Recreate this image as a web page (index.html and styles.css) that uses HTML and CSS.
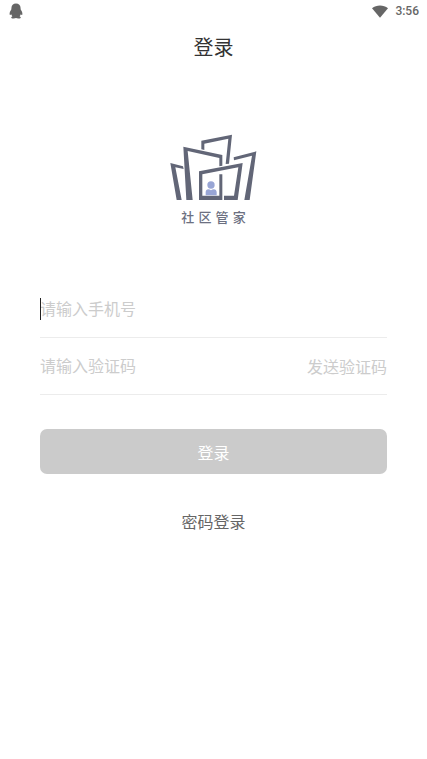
FILE: index.html
```html
<!DOCTYPE html>
<html lang="zh-CN">
<head>
<meta charset="utf-8">
<meta name="viewport" content="width=device-width, initial-scale=1">
<title>登录</title>
<link rel="stylesheet" href="styles.css">
</head>
<body>
<div class="status-bar">
  <svg class="notice-icon" viewBox="0 0 14 16" aria-hidden="true">
    <path d="M7 .5C4.200.5 2.500 2.300 2.500 4.600L2.300 6.600C1.200 8 .5 9.900.6 11.200c.1 1 .8.8 1.600 0 .2.9.6 1.400 1.200 2-1 .5-1.400 1.100-1 1.700.6.7 3.500.7 4.600.2 1.100.5 4 .5 4.600-.2.4-.6 0-1.200-1-1.700.6-.6 1-1.100 1.200-2 .8.8 1.500 1 1.600 0 .1-1.300-.6-3.200-1.700-4.600l-.2-2C11.500 2.300 9.800.5 7 .5z"/>
  </svg>
  <div class="status-right">
    <svg class="wifi-icon" viewBox="0 0 16 13" aria-hidden="true"><path d="M0 3.300C4.500-.5 11.500-.5 16 3.300L8 12.800z"/></svg>
    <time>3:56</time>
  </div>
</div>
<header class="title-bar"><h1>登录</h1></header>
<main class="login">
  <div class="brand">
    <svg class="brand-mark" viewBox="29 24 264 204" aria-hidden="true">
      <g class="building">
        <path d="M68 124L70 132L45 127L64 225H49L30 114z"/>
        <path d="M69 65L186 90V122L177 124V99L82 78L97 225H78z"/>
        <path d="M123 73V47L215 29L206 116L196 117L204 41L132 56V75z"/>
        <path d="M220 97L288 79L268 225H252L275 92L221 106z"/>
        <path d="M116 139L247 114L232 225H191V212H221L234 127L126 148V212H177V148H186V225H116z"/>
      </g>
      <g class="person">
        <circle cx="152" cy="180" r="11"/>
        <path d="M136 211V202C136 192 145 191 152 196C159 191 169 192 169 202V211z"/>
      </g>
    </svg>
    <p class="brand-name">社 区 管 家</p>
  </div>
  <form class="login-form">
    <div class="field field-active">
      <input type="tel" aria-label="手机号" placeholder="请输入手机号">
    </div>
    <div class="field">
      <input type="text" inputmode="numeric" aria-label="验证码" placeholder="请输入验证码">
      <button class="send-code" type="button">发送验证码</button>
    </div>
    <button class="submit" type="submit">登录</button>
  </form>
  <a class="password-login" href="#password">密码登录</a>
</main>
</body>
</html>
```

FILE: styles.css
```css
* {
  box-sizing: border-box;
}

body {
  margin: 0;
  background: #fff;
  color: #333;
  font-family: Roboto, "Noto Sans CJK SC", sans-serif;
  font-size: 16px;
}

input,
button {
  margin: 0;
  padding: 0;
  border: 0;
  background: none;
  color: inherit;
  font: inherit;
}

.status-bar {
  display: flex;
  align-items: center;
  justify-content: space-between;
  height: 22px;
  padding: 0 8px 0 9px;
  color: #666;
}

.status-bar svg {
  display: block;
  fill: #666;
}

.notice-icon {
  width: 14px;
  height: 16px;
}

.status-right {
  display: flex;
  align-items: center;
  gap: 7px;
  font-size: 12px;
  font-weight: 500;
  line-height: 24px;
}

.wifi-icon {
  width: 16px;
  height: 13px;
}

.title-bar {
  display: flex;
  align-items: center;
  justify-content: center;
  height: 52px;
}

.title-bar h1 {
  margin: 0;
  font-size: 20px;
  font-weight: 400;
  line-height: 28px;
}

.login {
  display: flex;
  flex-direction: column;
  align-items: center;
  padding: 59px 40px 40px;
}

.brand {
  display: flex;
  flex-direction: column;
  align-items: center;
  gap: 7px;
}

.brand-mark {
  display: block;
  width: 88px;
  height: 68px;
}

.building {
  fill: #626677;
}

.person {
  fill: #98a5d5;
}

.brand-name {
  margin: 0;
  color: #6c7081;
  font-family: "DejaVu Sans", "Noto Sans CJK SC", sans-serif;
  font-size: 13px;
  font-weight: 500;
  line-height: 20px;
}

.login-form {
  width: 100%;
  margin-top: 53px;
}

.field {
  display: flex;
  align-items: center;
  height: 57px;
  border-bottom: 1px solid #ececec;
}

.field input {
  flex: 1;
  min-width: 0;
  height: 32px;
  outline: none;
}

.field input::placeholder {
  color: #ccc;
  opacity: 1;
}

.field-active {
  position: relative;
}

.field-active::before {
  content: "";
  position: absolute;
  left: 0;
  width: 1px;
  height: 22px;
  background: #222;
}

.send-code {
  color: #ccc;
}

.submit {
  display: block;
  width: 100%;
  height: 45px;
  margin-top: 34px;
  border-radius: 7px;
  background: #cbcbcb;
  color: #fff;
}

.password-login {
  margin-top: 37px;
  color: #666;
  line-height: 24px;
  text-decoration: none;
}
```
